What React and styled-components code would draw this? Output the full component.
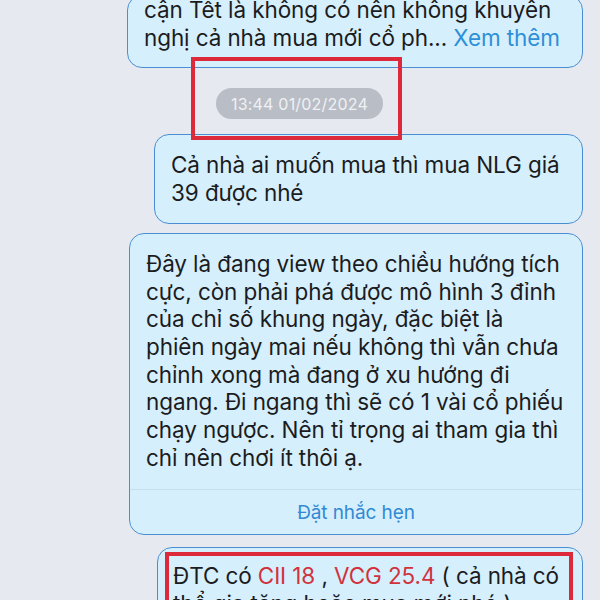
import React from 'react';
import styled, { createGlobalStyle } from 'styled-components';

const GlobalStyle = createGlobalStyle`
  html, body {
    margin: 0;
    padding: 0;
    background: #e6e9f0;
    overflow: hidden;
  }
`;

const Page = styled.div`
  width: 600px;
  height: 600px;
  overflow: hidden;
  background: #e6e9f0;
  font-family: 'Inter', 'Noto Sans', sans-serif;
  color: #1b1c1e;
`;

const Thread = styled.div`
  display: flex;
  flex-direction: column;
  align-items: flex-end;
  padding: 0 17px 0 0;
  margin-top: -5px;
`;

const Bubble = styled.div`
  box-sizing: border-box;
  width: ${p => p.width}px;
  margin-top: ${p => p.gap || 0}px;
  background: #d6effc;
  border: 1.5px solid #4a8fd3;
  border-radius: 15px;
  font-size: 22.5px;
  line-height: 27.7px;
  letter-spacing: -0.1px;
`;

const Body = styled.div`
  padding: ${p => p.pad || '16px 16px 16px 16px'};
`;

const More = styled.span`
  color: #2e8fd8;
`;

const Footer = styled.div`
  border-top: 1px solid #c6dfec;
  height: 44px;
  display: flex;
  align-items: center;
  justify-content: center;
  color: #3189d4;
  font-size: 19px;
  margin-top: 6px;
`;

const StampRow = styled.div`
  position: relative;
  align-self: stretch;
  display: flex;
  justify-content: flex-start;
  padding: 20px 0 15px 216px;
`;

const Stamp = styled.div`
  width: 167px;
  height: 31px;
  border-radius: 16px;
  background: #b9bdc5;
  color: #eff1f4;
  font-size: 16px;
  display: flex;
  align-items: center;
  justify-content: center;
  letter-spacing: 0.2px;
`;

const Mark = styled.div`
  position: absolute;
  border: 4px solid #dc2a3a;
  box-sizing: border-box;
  pointer-events: none;
`;

const StampMark = styled(Mark)`
  left: 191px;
  top: -11px;
  width: 211px;
  height: 83px;
`;

const Highlighted = styled.div`
  position: relative;
  padding: 14px 16px 16px 15px;
`;

const BoxMark = styled(Mark)`
  left: 7px;
  top: 4px;
  right: 9px;
  bottom: -40px;
`;

const Code = styled.span`
  color: #cf333e;
`;

export default function App() {
  return (
    <Page>
      <GlobalStyle />
      <Thread>
        <Bubble width={456}>
          <Body pad="0 16px 16px 16px">
            cận Tết là không có nên không khuyên nghị cả nhà mua mới cổ ph...{' '}
            <More>Xem thêm</More>
          </Body>
        </Bubble>

        <StampRow>
          <Stamp>13:44 01/02/2024</Stamp>
          <StampMark />
        </StampRow>

        <Bubble width={429}>
          <Body>Cả nhà ai muốn mua thì mua NLG giá 39 được nhé</Body>
        </Bubble>

        <Bubble width={454} gap={9}>
          <Body pad="16px 16px 12px 16px">
            Đây là đang view theo chiều hướng tích cực, còn phải phá được mô hình 3 đỉnh
            của chỉ số khung ngày, đặc biệt là phiên ngày mai nếu không thì vẫn chưa
            chỉnh xong mà đang ở xu hướng đi ngang. Đi ngang thì sẽ có 1 vài cổ phiếu
            chạy ngược. Nên tỉ trọng ai tham gia thì chỉ nên chơi ít thôi ạ.
          </Body>
          <Footer>Đặt nhắc hẹn</Footer>
        </Bubble>

        <Bubble width={426} gap={12}>
          <Highlighted>
            ĐTC có <Code>CII 18</Code> , <Code>VCG 25.4</Code> ( cả nhà có thể gia tăng
            hoặc mua mới nhé )
            <BoxMark />
          </Highlighted>
        </Bubble>
      </Thread>
    </Page>
  );
}
